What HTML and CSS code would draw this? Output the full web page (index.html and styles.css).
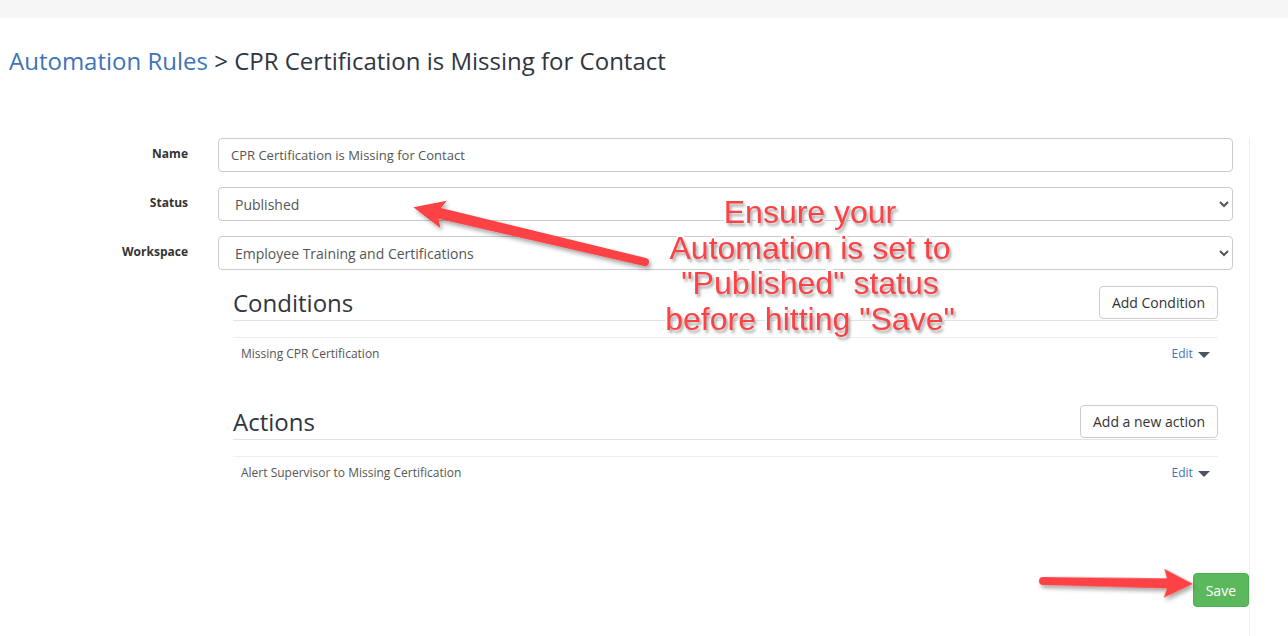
FILE: index.html
```html
<html>
<head>
<meta http-equiv="content-type" content="text/html; charset=utf-8">
<meta name="viewport" content="width=device-width, initial-scale=1">
<link rel="stylesheet" href="styles.css">
<title>Automation Rules: CPR Certification is Missing for Contact</title>
</head>
<body>
<div class=topbar></div>
<h1 class=crumb><a href=#>Automation Rules</a> &gt; CPR Certification is Missing for Contact</h1>
<div class=panel>
<form class=rule>
<label class=lbl>Name</label>
<input class=ctl type=text value="CPR Certification is Missing for Contact">
<label class=lbl>Status</label>
<select class="ctl pick"><option>Published</option></select>
<label class=lbl>Workspace</label>
<select class="ctl pick"><option>Employee Training and Certifications</option></select>
<div class=blocks>
<div class=bhead><h2>Conditions</h2><button type=button class=btn>Add Condition</button></div>
<div class=item><span>Missing CPR Certification</span><a href=# class=edit>Edit <i class=caret></i></a></div>
<div class="bhead next"><h2>Actions</h2><button type=button class=btn>Add a new action</button></div>
<div class=item><span>Alert Supervisor to Missing Certification</span><a href=# class=edit>Edit <i class=caret></i></a></div>
</div>
</form>
<div class=foot><button type=button class=save>Save</button></div>
</div>
<svg class=marks width=1288 height=636 viewBox="0 0 1288 636">
<defs>
<filter id=shade x="-20%" y="-50%" width="140%" height="200%">
<feDropShadow dx="2" dy="3" stdDeviation="2" flood-color="#000" flood-opacity="0.35"/>
</filter>
</defs>
<g fill="#fc4245" filter="url(#shade)">
<path transform="translate(645,262) rotate(193.3)" d="M0,-4 L211,-5.5 L207,-14 L238,0 L207,14 L211,5.5 L0,4 A4,4 0 0 1 0,-4 Z"/>
<path transform="translate(1043,581) rotate(1.1)" d="M0,-4 L124,-5 L121,-14.5 L150,0 L121,14.5 L124,5 L0,4 A4,4 0 0 1 0,-4 Z"/>
</g>
</svg>
<div class=note>Ensure your<br>Automation is set to<br>"Published" status<br>before hitting "Save"</div>
</body>
</html>
```
FILE: styles.css
```css
html,body{margin:0;padding:0}
body{font-family:"Open Sans","Noto Sans","DejaVu Sans",sans-serif;color:#333;background:#fff;position:relative;overflow:hidden;height:636px}
.topbar{height:18px;background:#f6f6f6}
.crumb{margin:26px 0 0 0;padding-left:9px;font-size:24px;font-weight:normal;line-height:34px;color:#2f3640}
.crumb a{color:#3f74b6;text-decoration:none}
.panel{box-sizing:border-box;width:1250px;margin-top:60px;padding-right:16px;padding-bottom:28px;border-right:1px solid #eee;height:498px}
.rule{display:grid;grid-template-columns:188px 1fr;column-gap:30px;row-gap:15px;margin:0}
.lbl{align-self:center;text-align:right;font-size:12px;font-weight:bold;color:#333;padding-bottom:3px}
.ctl{box-sizing:border-box;height:34px;width:100%;padding:6px 12px;border:1px solid #ccc;border-radius:4px;background:#fff;
font-family:"Open Sans",sans-serif;font-size:13px;color:#555}
.pick{font-size:14px;padding-left:12px}
.blocks{grid-column:2;padding:1px 15px 0 15px}
.bhead{display:flex;justify-content:space-between;align-items:center;border-bottom:1px solid #e3e3e3}
.bhead h2{margin:0;font-size:24px;font-weight:normal;line-height:33px;color:#2f3640;padding-bottom:1px}
.next{margin-top:34px}
.btn{box-sizing:border-box;height:33px;padding:6px 12px;border:1px solid #ccc;border-radius:4px;background:#fff;
font-family:"Open Sans",sans-serif;font-size:14px;color:#333;margin-bottom:1px}
.item{display:flex;justify-content:space-between;align-items:center;margin-top:16px;padding:8px 8px 9px 8px;border-top:1px solid #eee;
font-size:12px;line-height:16px;color:#555}
.edit{color:#3f74b6;text-decoration:none}
.caret{display:inline-block;width:0;height:0;margin-left:2px;vertical-align:middle;border-left:6px solid transparent;border-right:6px solid transparent;border-top:6px solid #4d5563}
.foot{display:flex;justify-content:flex-end;margin-top:83px;margin-right:-16px}
.save{box-sizing:border-box;height:34px;padding:6px 12px;border:1px solid #4cae4c;border-radius:4px;background:#5cb85c;color:#fff;
font-family:"Open Sans",sans-serif;font-size:14px}
.marks{position:absolute;left:0;top:0;pointer-events:none}
.note{position:absolute;left:610px;top:195px;width:400px;text-align:center;font-family:"Liberation Sans",Arial,sans-serif;font-size:32px;line-height:35.5px;
color:#fc4245;-webkit-text-stroke:4px #fff;paint-order:stroke fill;text-shadow:2px 3px 3px rgba(0,0,0,0.35)}
```
